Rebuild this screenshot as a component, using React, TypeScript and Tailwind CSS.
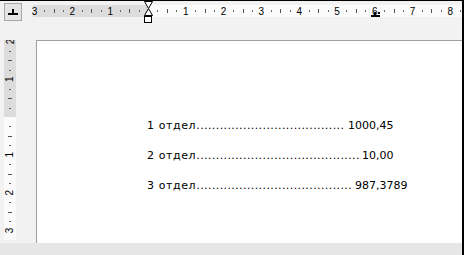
import React from "react";

const CM = 37.8;

function TopMarks() {
  const els: React.ReactNode[] = [];
  const m = 148;
  for (let k = -3; k <= 8; k++) {
    const x = m + k * CM;
    if (k !== 0)
      els.push(
        <text key={"n" + k} x={x} y={14} textAnchor="middle" fontSize={10} fill="#000" fontFamily="'Liberation Sans', Arial, sans-serif">
          {Math.abs(k)}
        </text>
      );
    for (const q of [0.25, 0.5, 0.75]) {
      const tx = x + q * CM;
      if (tx < 34 || tx > 460) continue;
      if (Math.abs(tx - m) < 3) continue;
      if (q === 0.5) els.push(<rect key={"t" + k + q} x={Math.round(tx)} y={8} width={1} height={4} fill="#555" />);
      else els.push(<rect key={"t" + k + q} x={Math.round(tx)} y={9} width={1} height={2} fill="#666" />);
    }
  }
  return (
    <svg className="absolute left-0 top-0" width={462} height={39}>
      {els}
      <path d="M144.5 0.5 H152.5 L148.5 7.5 Z" fill="#fff" stroke="#000" />
      <path d="M148.5 7.5 L152.5 14.5 H144.5 Z" fill="#fff" stroke="#000" />
      <rect x={144.5} y={15.5} width={7} height={6} fill="#fff" stroke="#000" />
      <rect x={371} y={14} width={9} height={2} fill="#000" />
      <rect x={374} y={11} width={2} height={3} fill="#000" />
      <rect x={378} y={11} width={2} height={2} fill="#000" />
    </svg>
  );
}

function LeftMarks() {
  const els: React.ReactNode[] = [];
  const m = 77;
  for (let k = -2; k <= 3; k++) {
    const y = m + k * CM;
    if (k !== 0)
      els.push(
        <text
          key={"n" + k}
          x={10}
          y={y}
          textAnchor="middle"
          dominantBaseline="central"
          fontSize={10}
          fill="#000"
          fontFamily="'Liberation Sans', Arial, sans-serif"
          transform={`rotate(-90 10 ${y})`}
        >
          {Math.abs(k)}
        </text>
      );
    for (const q of [0.25, 0.5, 0.75]) {
      const ty = y + q * CM;
      if (ty < 2 || ty > 198) continue;
      if (Math.abs(ty - m) < 3) continue;
      if (q === 0.5) els.push(<rect key={"t" + k + q} x={8} y={Math.round(ty)} width={4} height={1} fill="#555" />);
      else els.push(<rect key={"t" + k + q} x={9} y={Math.round(ty)} width={2} height={1} fill="#666" />);
    }
  }
  return (
    <svg className="absolute left-0 top-0" width={36} height={203}>
      {els}
    </svg>
  );
}

const rows = [
  { label: "1 отдел", int: "1000", frac: ",45", gap: "pl-[4px]" },
  { label: "2 отдел", int: "10", frac: ",00", gap: "pl-[1px]" },
  { label: "3 отдел", int: "987", frac: ",3789", gap: "pl-[2px]" },
];

export default function App() {
  const dots = ".".repeat(100);
  return (
    <div className="w-[464px] h-[255px] overflow-hidden bg-[#f2f2f2] border-t border-black border-r-2 flex flex-col" style={{ fontFamily: "'DejaVu Sans', Verdana, sans-serif" }}>
      <div className="relative h-[39px] flex shrink-0">
        <div className="w-[33px] shrink-0 pl-[4px] pt-[2px]">
          <div className="w-[18px] h-[18px] border border-[#a8a8a8] bg-[#e4e4e4] flex items-center justify-center">
            <svg width="10" height="8" viewBox="0 0 10 8">
              <rect x="4" y="1" width="2" height="5" fill="#000" />
              <rect x="0" y="5" width="10" height="2" fill="#000" />
            </svg>
          </div>
        </div>
        <div className="flex-1 pt-[4px]">
          <div className="h-[12px] flex">
            <div className="w-[115px] bg-[#dcdcdc]" />
            <div className="flex-1 bg-[#fbfbfb]" />
          </div>
        </div>
        <TopMarks />
      </div>
      <div className="h-[203px] flex shrink-0">
        <div className="relative w-[36px] shrink-0 pl-[4px]">
          <div className="w-[12px] h-[200px] flex flex-col">
            <div className="h-[77px] bg-[#dcdcdc]" />
            <div className="flex-1 bg-[#fbfbfb]" />
          </div>
          <LeftMarks />
        </div>
        <div className="flex-1 bg-white border-l border-t border-[#a0a0a0] pl-[110px] pt-[70px] text-[11px] text-black">
          {rows.map((r) => (
            <div key={r.label} className="flex h-[30px] leading-[30px] whitespace-nowrap w-[290px]">
              <div className="w-[229px] flex shrink-0">
                <span className="tracking-[0.6px]">{r.label}</span>
                <span className="flex-1 min-w-0 overflow-hidden tracking-[0.4px]">{dots}</span>
                <span className={r.gap}>{r.int}</span>
              </div>
              <span>{r.frac}</span>
            </div>
          ))}
        </div>
      </div>
      <div className="flex-1 bg-[#e6e6e6]" />
    </div>
  );
}
